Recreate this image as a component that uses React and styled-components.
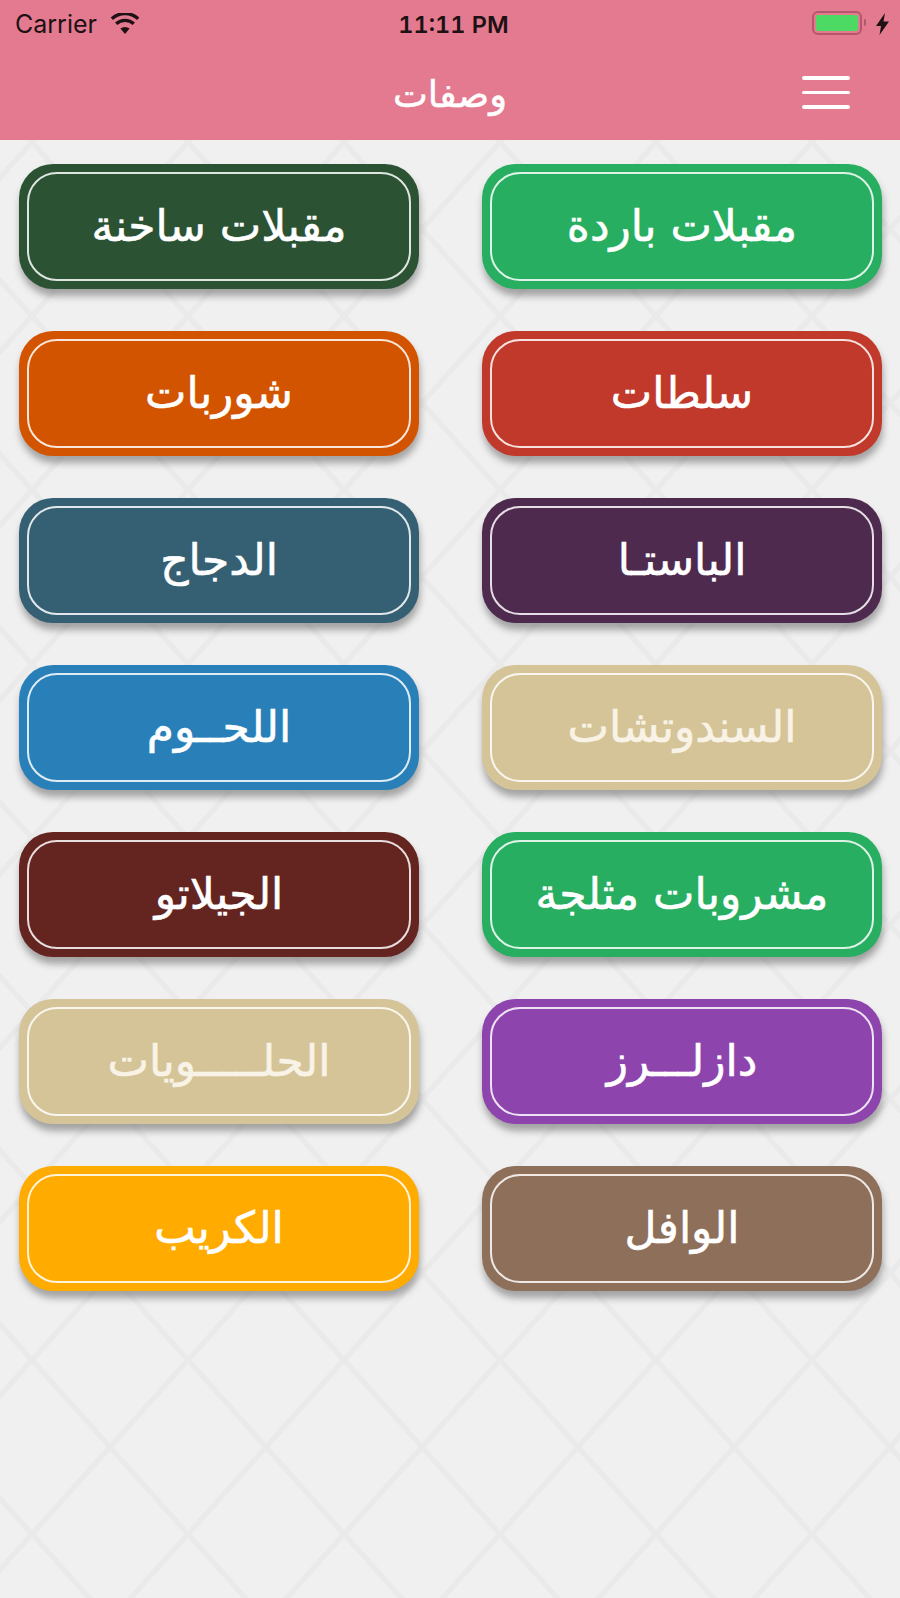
import styled, { createGlobalStyle } from "styled-components";

const GlobalStyle = createGlobalStyle`
  html, body {
    margin: 0;
    padding: 0;
    background: #f0f0f1;
  }
`;

const latticeSvg = encodeURIComponent(
  `<svg xmlns="http://www.w3.org/2000/svg" width="156" height="174"><path d="M-78 -87L234 261M234 -87L-78 261" stroke="#eaeaeb" stroke-width="5.5" fill="none"/></svg>`
);

const Screen = styled.div`
  width: 900px;
  min-height: 1598px;
  background-color: #f0f0f1;
  background-image: url("data:image/svg+xml,${latticeSvg}");
  background-position: 32px 142px;
  font-family: "Inter", "Liberation Sans", sans-serif;
`;

const Header = styled.header`
  height: 140px;
  background: #e47a8f;
  display: flex;
  flex-direction: column;
`;

const StatusBar = styled.div`
  height: 48px;
  display: grid;
  grid-template-columns: 1fr auto 1fr;
  align-items: center;
  padding: 0 11px 0 15px;
  color: #1d1114;
`;

const Carrier = styled.div`
  display: flex;
  align-items: center;
  gap: 13px;
  font-size: 25px;
`;

const Clock = styled.div`
  font-size: 23.5px;
  font-weight: 600;
  font-variant-numeric: tabular-nums;
  margin-left: 3px;
`;

const BatteryGroup = styled.div`
  display: flex;
  align-items: center;
  justify-content: flex-end;
`;

const BatteryCase = styled.div`
  width: 50px;
  height: 24px;
  margin-bottom: 3px;
  box-sizing: border-box;
  border: 2px solid #b4566c;
  border-radius: 6px;
  padding: 2px;
`;

const BatteryFill = styled.div`
  height: 100%;
  background: #4cd964;
  border-radius: 2px;
`;

const BatteryTip = styled.div`
  width: 2px;
  height: 7px;
  margin: 0 10px 3px 2px;
  background: #a95a6c;
  border-radius: 0 2px 2px 0;
`;

const NavBar = styled.div`
  flex: 1;
  display: grid;
  grid-template-columns: 1fr auto 1fr;
  align-items: center;
  padding: 0 50px;
`;

const Title = styled.h1`
  grid-column: 2;
  margin: 2px 0 0;
  font-family: "DejaVu Sans", sans-serif;
  font-size: 37px;
  line-height: 1.2;
  font-weight: 400;
  color: #fff;
  -webkit-text-stroke: 0.5px #fff;
`;

const MenuButton = styled.div`
  grid-column: 3;
  justify-self: end;
  width: 48px;
  display: flex;
  flex-direction: column;
  gap: 11px;
  margin-bottom: 3px;
`;

const MenuBar = styled.span`
  display: block;
  height: 3.5px;
  border-radius: 2px;
  background: #fff;
`;

const Grid = styled.main`
  direction: rtl;
  display: grid;
  grid-template-columns: 400px 400px;
  column-gap: 63px;
  row-gap: 42px;
  padding: 24px 18px 0 19px;
`;

const CategoryCard = styled.div`
  height: 125px;
  box-sizing: border-box;
  padding: 8px;
  border-radius: 34px;
  background: ${(p) => p.$bg};
  box-shadow: 1px 7px 7px rgba(70, 70, 70, 0.45);
`;

const CategoryInner = styled.div`
  height: 100%;
  box-sizing: border-box;
  padding-bottom: 3px;
  border: 2px solid rgba(255, 255, 255, 0.85);
  border-radius: 30px;
  display: flex;
  align-items: center;
  justify-content: center;
  font-family: "DejaVu Sans", sans-serif;
  font-size: 44px;
  color: ${(p) => p.$fg || "#fff"};
  -webkit-text-stroke: 0.6px ${(p) => p.$fg || "#fff"};
`;

const categories = [
  { name: "مقبلات باردة", bg: "#27ae60" },
  { name: "مقبلات ساخنة", bg: "#2c5234" },
  { name: "سلطات", bg: "#c0392b" },
  { name: "شوربات", bg: "#d35400" },
  { name: "الباستـا", bg: "#4f2a4f" },
  { name: "الدجاج", bg: "#355f72" },
  { name: "السندوتشات", bg: "#d5c498", fg: "#f8f3e6" },
  { name: "اللحــوم", bg: "#2980b9" },
  { name: "مشروبات مثلجة", bg: "#27ae60" },
  { name: "الجيلاتو", bg: "#642420" },
  { name: "دازلـــرز", bg: "#8e44ad" },
  { name: "الحلـــــويات", bg: "#d5c498", fg: "#f8f3e6" },
  { name: "الوافل", bg: "#8d6f5a" },
  { name: "الكريب", bg: "#ffab00" },
];

function WifiIcon() {
  return (
    <svg width="30" height="22" viewBox="0 0 30 22">
      <path d="M15 21l-4.600-5.400a7 7 0 0 1 9.200 0z" fill="#1d1114" />
      <path
        d="M6.200 10.800a13 13 0 0 1 17.600 0M1.800 5.800a19.500 19.500 0 0 1 26.400 0"
        fill="none"
        stroke="#1d1114"
        strokeWidth="3.400"
      />
    </svg>
  );
}

function BoltIcon() {
  return (
    <svg width="13" height="22" viewBox="0 0 13 22">
      <path d="M9 0L0 13h5L3.500 22 13 8.500H7.500z" fill="#1d1114" />
    </svg>
  );
}

export default function App() {
  return (
    <Screen>
      <GlobalStyle />
      <Header>
        <StatusBar>
          <Carrier>
            Carrier
            <WifiIcon />
          </Carrier>
          <Clock>11:11 PM</Clock>
          <BatteryGroup>
            <BatteryCase>
              <BatteryFill />
            </BatteryCase>
            <BatteryTip />
            <BoltIcon />
          </BatteryGroup>
        </StatusBar>
        <NavBar>
          <Title dir="rtl">وصفات</Title>
          <MenuButton>
            <MenuBar />
            <MenuBar />
            <MenuBar />
          </MenuButton>
        </NavBar>
      </Header>
      <Grid>
        {categories.map((c) => (
          <CategoryCard key={c.name + c.bg} $bg={c.bg}>
            <CategoryInner $fg={c.fg}>{c.name}</CategoryInner>
          </CategoryCard>
        ))}
      </Grid>
    </Screen>
  );
}
